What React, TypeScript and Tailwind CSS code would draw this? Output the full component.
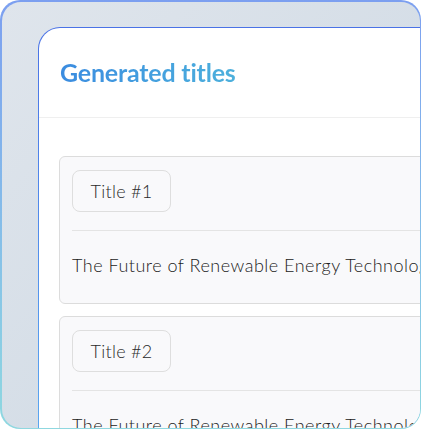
import React from "react";

const titles = [
  "The Future of Renewable Energy Technologies",
  "The Future of Renewable Energy Technologies",
];

export default function App() {
  return (
    <div className="w-[421px] h-[430px] bg-white">
      <div className="w-[421px] h-[429px] rounded-[20px] p-[1.5px] bg-gradient-to-b from-[#7c9ff0] to-[#8fd8e0]">
        <div className="h-full w-full rounded-[19px] overflow-hidden bg-gradient-to-br from-[#dfe5ec] to-[#cdd8e3] pl-[36.5px] pt-[25.5px]">
          <div className="w-[520px] h-full rounded-tl-[22px] pt-[1px] pl-[1px] bg-gradient-to-b from-[#4a72e6] to-[#5aa6f0]">
            <div className="h-full rounded-tl-[21px] bg-white font-['Lato',sans-serif]">
              {/* Header */}
              <div className="h-[90px] flex items-center pl-[21px] border-b border-[#efefef]">
                <h1 className="text-[25px] font-bold tracking-[-0.2px] bg-gradient-to-r from-[#3b8ce0] to-[#4db0dc] bg-clip-text text-transparent">
                  Generated titles
                </h1>
              </div>

              {/* Cards */}
              <div className="pt-[38px] pl-[20px] flex flex-col gap-3">
                {titles.map((t, i) => (
                  <div key={i} className="w-[480px] rounded-[6px] border border-[#dcdcdc] bg-[#f9f9fb] pl-[12px] pt-[13px]">
                    <div className="w-[99px] h-[42px] rounded-[8px] border border-[#dedede] flex items-center justify-center text-[18px] font-light tracking-[0.3px] text-[#2a2a2a]">
                      Title #{i + 1}
                    </div>
                    <div className="mt-[18px] h-px bg-[#e4e4e4]" />
                    <p className="pt-[21px] pb-[25px] leading-[26px] text-[18px] font-light tracking-[0.5px] text-[#222] whitespace-nowrap">
                      {t}
                    </p>
                  </div>
                ))}
              </div>
            </div>
          </div>
        </div>
      </div>
    </div>
  );
}
